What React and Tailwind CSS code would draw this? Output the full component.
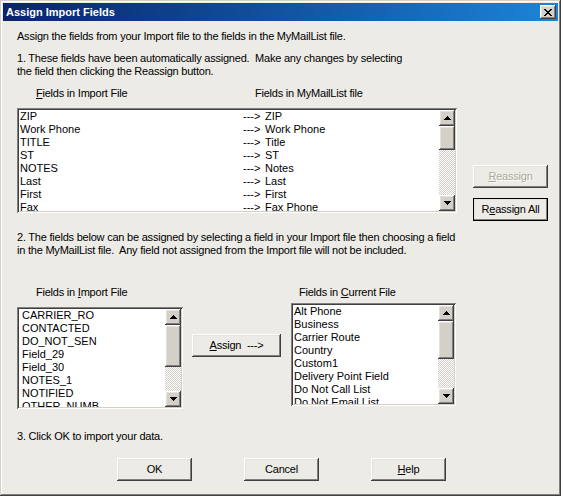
import React from 'react';

const raised =
  'shadow-[inset_-1px_-1px_#404040,inset_1px_1px_#ffffff,inset_-2px_-2px_#808080,inset_2px_2px_#e4e2dc]';
const sunken =
  'shadow-[inset_1px_1px_#808080,inset_-1px_-1px_#ffffff,inset_2px_2px_#404040,inset_-2px_-2px_#d4d0c8]';

const mapped = [
  ['ZIP', 'ZIP'],
  ['Work Phone', 'Work Phone'],
  ['TITLE', 'Title'],
  ['ST', 'ST'],
  ['NOTES', 'Notes'],
  ['Last', 'Last'],
  ['First', 'First'],
  ['Fax', 'Fax Phone'],
];

const importFields = ['CARRIER_RO', 'CONTACTED', 'DO_NOT_SEN', 'Field_29', 'Field_30', 'NOTES_1', 'NOTIFIED', 'OTHER_NUMB'];

const currentFields = [
  'Alt Phone',
  'Business',
  'Carrier Route',
  'Country',
  'Custom1',
  'Delivery Point Field',
  'Do Not Call List',
  'Do Not Email List',
];

const Arrow = ({ up }) => (
  <svg width="7" height="4" viewBox="0 0 7 4" shapeRendering="crispEdges">
    <path d={up ? 'M3 0h1v1h1v1h1v1h1v1H0V3h1V2h1V1h1z' : 'M0 0h7v1H6v1H5v1H4v1H3V3H2V2H1V1H0z'} fill="#000" />
  </svg>
);

const ScrollBar = ({ thumb }) => (
  <div className="w-4 flex flex-col">
    <div className={`h-4 bg-[#d4d0c8] flex items-center justify-center ${raised}`}>
      <Arrow up />
    </div>
    <div className={`bg-[#d4d0c8] ${raised}`} style={{ height: thumb }} />
    <div className="flex-1 bg-[repeating-conic-gradient(#ffffff_0%_25%,#d4d0c8_0%_50%)] bg-[length:2px_2px]" />
    <div className={`h-4 bg-[#d4d0c8] flex items-center justify-center ${raised}`}>
      <Arrow />
    </div>
  </div>
);

const Button = ({ children, className = '', disabled, isDefault }) => (
  <div
    className={`h-[23px] w-[75px] flex items-center justify-center bg-[#ecebe6] ${raised} ${
      isDefault ? 'outline outline-1 outline-black -outline-offset-1' : ''
    } ${disabled ? 'text-[#aca899] [text-shadow:1px_1px_#ffffff]' : 'text-black'} ${className}`}
  >
    {children}
  </div>
);

const U = ({ children }) => <span className="underline underline-offset-[1px]">{children}</span>;

export default function App() {
  return (
    <div className="min-h-screen bg-white font-['Liberation_Sans',Arial,sans-serif] text-[11px] text-black">
      <div className="w-[561px] h-[496px] bg-[#ecebe6] p-[3px] flex flex-col shadow-[inset_-1px_-1px_#404040,inset_1px_1px_#d4d0c8,inset_-2px_-2px_#808080,inset_2px_2px_#ffffff]">
        <div className="h-[18px] flex items-center justify-between pl-[3px] pr-[2px] bg-linear-to-r from-[#0a246a] to-[#1d84d8]">
          <span className="text-white font-bold text-[11px] leading-[13px]">Assign Import Fields</span>
          <div className={`w-4 h-[14px] bg-[#d4d0c8] flex items-center justify-center ${raised}`}>
            <svg width="8" height="7" viewBox="0 0 8 7" shapeRendering="crispEdges">
              <path d="M0 0h2v1h1v1h2V1h1V0h2v1H7v1H6v1H5v1h1v1h1v1h1v1H6V6H5V5H3v1H2v1H0V6h1V5h1V4h1V3H2V2H1V1H0z" fill="#000" />
            </svg>
          </div>
        </div>

        <div className="flex-1 pl-[14px] pt-[9px] tracking-[-0.22px] leading-[13px]">
          <p>Assign the fields from your Import file to the fields in the MyMailList file.</p>
          <p className="mt-[9px]">
            1. These fields have been automatically assigned.&nbsp; Make any changes by selecting
            <br />
            the field then clicking the Reassign button.
          </p>

          <div className="flex mt-[9px] h-[13px]">
            <span className="ml-[19px] w-[219px]">
              <U>F</U>ields in Import File
            </span>
            <span>Fields in MyMailList file</span>
          </div>

          <div className="flex items-start mt-[8px]">
            <div className={`w-[440px] h-[105px] bg-white p-[2px] flex ${sunken}`}>
              <div className="flex-1 overflow-hidden pl-[1px] tracking-normal">
                {mapped.map(([a, b]) => (
                  <div key={a} className="h-[13px] flex whitespace-nowrap">
                    <span className="w-[223px]">{a}</span>
                    <span className="w-[22px]">{'--->'}</span>
                    <span>{b}</span>
                  </div>
                ))}
              </div>
              <ScrollBar thumb={24} />
            </div>
            <div className="ml-[16px] mt-[57px] flex flex-col gap-[10px]">
              <Button disabled>
                <U>R</U>eassign
              </Button>
              <Button isDefault>
                R<U>e</U>assign All
              </Button>
            </div>
          </div>

          <p className="mt-[10px]">
            2. The fields below can be assigned by selecting a field in your Import file then choosing a field
            <br />
            in the MyMailList file.&nbsp; Any field not assigned from the Import file will not be included.
          </p>

          <div className="flex items-start mt-[29px]">
            <div className="flex flex-col">
              <span className="ml-[19px] h-[13px]">
                Fields in <U>I</U>mport File
              </span>
              <div className={`mt-[8px] w-[166px] h-[102px] bg-white p-[2px] flex ${sunken}`}>
                <div className="flex-1 overflow-hidden pl-[3px] tracking-normal">
                  {importFields.map((f) => (
                    <div key={f} className="h-[13px] whitespace-nowrap">
                      {f}
                    </div>
                  ))}
                </div>
                <ScrollBar thumb={42} />
              </div>
            </div>

            <Button className="ml-[9px] mt-[48px] w-[89px]">
              <U>A</U>ssign&nbsp; {'--->'}
            </Button>

            <div className="flex flex-col ml-[10px]">
              <span className="ml-[8px] h-[13px]">
                Fields in <U>C</U>urrent File
              </span>
              <div className={`mt-[4px] w-[165px] h-[103px] bg-white p-[2px] flex ${sunken}`}>
                <div className="flex-1 overflow-hidden pl-[1px] tracking-normal">
                  {currentFields.map((f) => (
                    <div key={f} className="h-[13px] whitespace-nowrap">
                      {f}
                    </div>
                  ))}
                </div>
                <ScrollBar thumb={38} />
              </div>
            </div>
          </div>

          <p className="mt-[21px]">3. Click OK to import your data.</p>

          <div className="flex mt-[15px] ml-[100px] gap-[52px]">
            <Button>OK</Button>
            <Button>Cancel</Button>
            <Button>
              <U>H</U>elp
            </Button>
          </div>
        </div>
      </div>
    </div>
  );
}
